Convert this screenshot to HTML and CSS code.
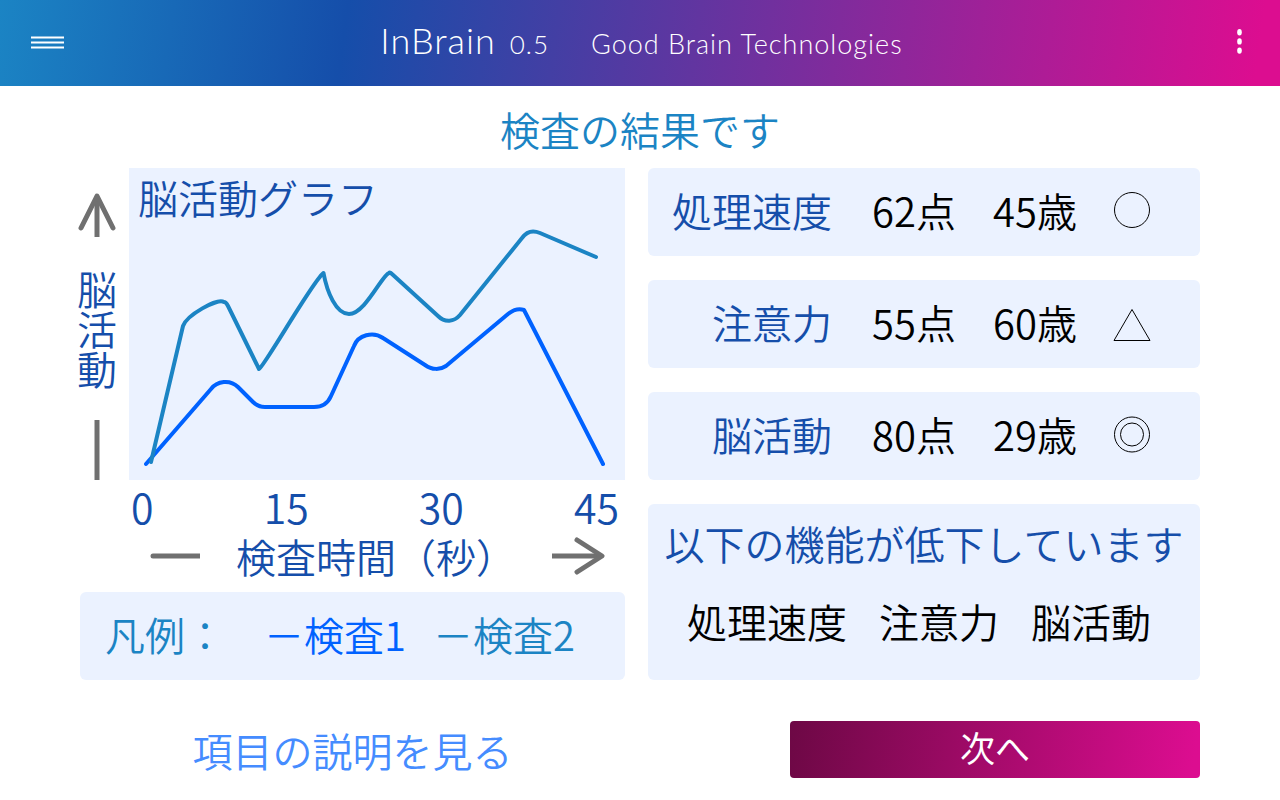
FILE: index.html
```html
<!DOCTYPE html>
<html lang="ja">
<head>
<meta charset="utf-8">
<meta name="viewport" content="width=device-width, initial-scale=1">
<title>InBrain 0.5</title>
<link rel="stylesheet" href="styles.css">
</head>
<body>
<header class="topbar">
  <button class="icon-button" type="button" aria-label="メニュー">
    <svg width="33" height="14" viewBox="0 0 33 14" stroke="#fff" stroke-width="2"><path d="M0 2.5h33M0 7.5h33M0 12.5h33"/></svg>
  </button>
  <div class="brand">
    <span class="brand-name">InBrain</span>
    <span class="brand-version">0.5</span>
    <span class="brand-company">Good Brain Technologies</span>
  </div>
  <button class="icon-button more-button" type="button" aria-label="その他">
    <svg width="5" height="26" viewBox="0 0 5 26" fill="#fff"><ellipse cx="2.5" cy="3.2" rx="2.3" ry="3.2"/><ellipse cx="2.5" cy="12.4" rx="2.3" ry="3.2"/><ellipse cx="2.5" cy="21.6" rx="2.3" ry="3.2"/></svg>
  </button>
</header>

<main class="page">
  <h1 class="page-title">検査の結果です</h1>

  <div class="columns">
    <section class="graph">
      <div class="y-axis">
        <svg width="40" height="44" viewBox="0 0 40 44" fill="none" stroke="#707070" stroke-width="5"><path d="M20 4v40"/><path d="M4 35 20 3l16 32" stroke-linecap="round" stroke-linejoin="round"/></svg>
        <span class="y-label">脳活動</span>
        <svg class="y-tail" width="40" height="60" viewBox="0 0 40 60" stroke="#707070" stroke-width="5"><path d="M20 0v60"/></svg>
      </div>
      <div class="plot">
        <h2 class="plot-title">脳活動グラフ</h2>
        <svg class="plot-lines" viewBox="129 168 496 312" fill="none" stroke-width="4" stroke-linecap="round" stroke-linejoin="round">
          <path stroke="#0062ff" d="M146 464 211 389C217 381 230 379 238 387L253 402C257 406 260 407 265 407H314C322 407 328 403 331 396L354 346C358 335 373 331 383 338L425 365C432 370 440 370 446 366L508 314C513 310 518 308 524 310L603 464"/>
          <path stroke="#1b84c4" d="M151 462 183 326C187 315 217 298 224 302Q226 302 228 306L259 369C264 367 314 279 323.5 273C327 292 336 314 349 314C365 314 382 275 389 273Q390 272 392 274L438 316C445 323 454 322 460 315L522 238C527 231 533 230 540 233L596 257"/>
        </svg>
      </div>
      <div class="ticks"><span>0</span><span>15</span><span>30</span><span>45</span></div>
      <div class="x-axis">
        <svg width="50" height="6" viewBox="0 0 50 6" stroke="#707070" stroke-width="5" stroke-linecap="round"><path d="M3 3h60"/></svg>
        <span>検査時間（秒）</span>
        <svg width="53" height="38" viewBox="0 0 53 38" fill="none" stroke="#707070" stroke-width="5"><path d="M0 19h48"/><path d="M25 3l25 16-25 16" stroke-linecap="round" stroke-linejoin="round"/></svg>
      </div>
      <div class="legend card">
        <span>凡例：</span>
        <span class="legend-first">－検査1</span>
        <span>－検査2</span>
      </div>
    </section>

    <section class="results">
      <table class="scores">
        <tbody>
          <tr class="card">
            <th scope="row">処理速度</th>
            <td>62点</td>
            <td>45歳</td>
            <td><svg role="img" aria-label="良い" width="38" height="38" viewBox="0 0 38 38" fill="none" stroke="#000"><circle cx="19" cy="19" r="17.5"/></svg></td>
          </tr>
          <tr class="card">
            <th scope="row">注意力</th>
            <td>55点</td>
            <td>60歳</td>
            <td><svg role="img" aria-label="注意" width="38" height="38" viewBox="0 0 38 38" fill="none" stroke="#000"><path d="M19 6.5 37 37.5H1z"/></svg></td>
          </tr>
          <tr class="card">
            <th scope="row">脳活動</th>
            <td>80点</td>
            <td>29歳</td>
            <td><svg role="img" aria-label="とても良い" width="38" height="38" viewBox="0 0 38 38" fill="none" stroke="#000"><circle cx="19" cy="19.5" r="17.5"/><circle cx="19" cy="19.5" r="11.5"/></svg></td>
          </tr>
        </tbody>
      </table>
      <div class="decline card">
        <h2 class="decline-title">以下の機能が低下しています</h2>
        <ul class="decline-list"><li>処理速度</li><li>注意力</li><li>脳活動</li></ul>
      </div>
    </section>
  </div>

  <div class="columns actions">
    <a class="details-link" href="#details">項目の説明を見る</a>
    <button class="next-button" type="button">次へ</button>
  </div>
</main>
</body>
</html>
```

FILE: styles.css
```css
* {
  box-sizing: border-box;
}

body {
  margin: 0;
  background: #fff;
  color: #000;
  font-family: "Noto Sans CJK JP", sans-serif;
  font-size: 40px;
  font-weight: 350;
  line-height: 48px;
}

h1,
h2,
ul {
  margin: 0;
  padding: 0;
  font-size: inherit;
  font-weight: inherit;
}

svg {
  display: block;
  flex: none;
}

.topbar {
  display: flex;
  align-items: center;
  justify-content: space-between;
  height: 86px;
  padding: 0 38px 2px 31px;
  background: linear-gradient(98deg, #1b84c4 0%, #154eaa 27%, #dc0d90 98%);
  color: #fff;
}

.icon-button {
  padding: 0;
  border: 0;
  background: none;
}

.more-button {
  padding-left: 18px;
}

.brand {
  display: flex;
  align-items: baseline;
  font-family: Lato, sans-serif;
  font-size: 27px;
  font-weight: 300;
  letter-spacing: 1px;
}

.brand-name {
  font-size: 36px;
}

.brand-version {
  margin: 0 42px 0 14px;
  font-size: 26px;
}

.page {
  padding: 19px 80px 22px 77px;
}

.page-title {
  margin-bottom: 15px;
  padding-left: 3px;
  color: #1b84c4;
  text-align: center;
}

.columns {
  display: grid;
  grid-template-columns: 548fr 552fr;
  column-gap: 23px;
}

.card {
  border-radius: 6px;
  background: #ebf2ff;
}

.graph {
  display: grid;
  grid-template-columns: 40px 1fr;
  column-gap: 12px;
  color: #154eaa;
}

.y-axis {
  display: flex;
  flex-direction: column;
  align-items: center;
  padding-top: 25px;
}

.y-label {
  margin-top: 33px;
  line-height: 40px;
  writing-mode: vertical-rl;
}

.y-tail {
  margin-top: auto;
}

.plot {
  display: grid;
  background: #ebf2ff;
}

.plot-title,
.plot-lines {
  grid-area: 1 / 1;
}

.plot-title {
  padding: 5px 9px;
}

.plot-lines {
  width: 100%;
}

.ticks {
  display: flex;
  grid-column: 2;
  justify-content: space-between;
  padding: 0 6px 0 2px;
  font-size: 41px;
  line-height: 52px;
}

.x-axis {
  display: flex;
  grid-column: 1 / -1;
  align-items: center;
  justify-content: space-between;
  padding: 0 20px 0 73px;
}

.legend {
  display: flex;
  grid-column: 1 / -1;
  align-items: center;
  height: 88px;
  margin: 12px 0 0 3px;
  padding: 0 0 4px 25px;
  color: #1b84c4;
}

.legend-first {
  margin: 0 27px 0 39px;
  color: #0062ff;
}

.results {
  display: flex;
  flex-direction: column;
  gap: 24px;
}

.scores,
.scores tbody {
  display: grid;
  gap: 24px;
}

.scores tr {
  display: grid;
  grid-template-columns: minmax(0, 184fr) minmax(0, 121fr) minmax(0, 120fr) minmax(0, 127fr);
  align-items: center;
  height: 88px;
  padding-bottom: 4px;
}

.scores th {
  padding: 0;
  color: #154eaa;
  font-weight: inherit;
  text-align: right;
}

.scores td {
  padding: 0 0 0 40px;
  white-space: nowrap;
}

.decline {
  flex: 1;
  padding-top: 15px;
}

.decline-title {
  color: #154eaa;
  text-align: center;
}

.decline-list {
  display: flex;
  justify-content: center;
  gap: 32px;
  margin-top: 30px;
  padding-right: 10px;
  list-style: none;
}

.actions {
  align-items: center;
  margin-top: 41px;
}

.details-link {
  padding-left: 3px;
  color: #458cff;
  text-align: center;
  text-decoration: none;
}

.next-button {
  justify-self: end;
  width: 410px;
  max-width: 100%;
  height: 57px;
  padding: 0 0 6px;
  border: 0;
  border-radius: 4px;
  background: linear-gradient(98deg, #6d0845, #dc0d90 98%);
  color: #fff;
  font: 400 35px/48px "Noto Sans CJK JP", sans-serif;
}
```
